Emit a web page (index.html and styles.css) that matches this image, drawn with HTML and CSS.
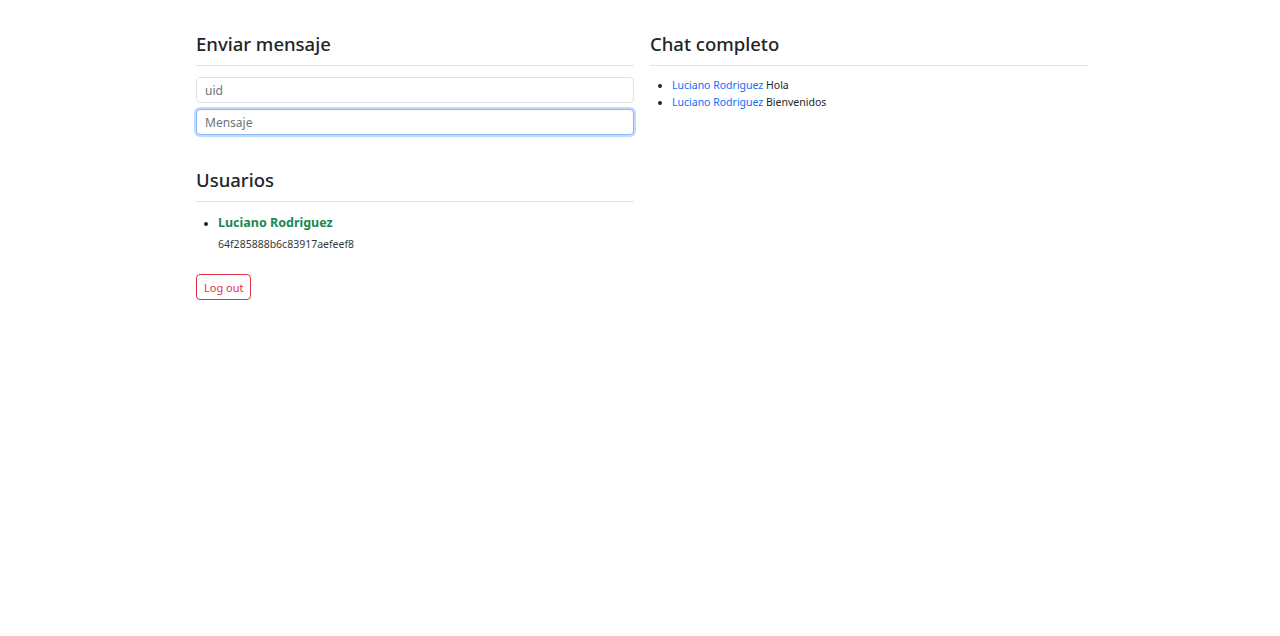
FILE: index.html
```html
<!DOCTYPE html>
<html lang="es">
<head>
<meta charset="utf-8">
<title>Chat</title>
<link rel="stylesheet" href="styles.css">
</head>
<body>
<div class="container">
  <div class="col">
    <h3 class="title">Enviar mensaje</h3>
    <hr class="sep">
    <form class="form">
      <input class="field" type="text" placeholder="uid">
      <input class="field focus" type="text" placeholder="Mensaje">
    </form>
    <h3 class="title users-title">Usuarios</h3>
    <hr class="sep">
    <ul class="users">
      <li>
        <span class="user-name">Luciano Rodriguez</span>
        <span class="user-id">64f285888b6c83917aefeef8</span>
      </li>
    </ul>
    <button class="btn-logout" type="button">Log out</button>
  </div>
  <div class="col">
    <h3 class="title">Chat completo</h3>
    <hr class="sep">
    <ul class="chat">
      <li><span class="author">Luciano Rodriguez</span> Hola</li>
      <li><span class="author">Luciano Rodriguez</span> Bienvenidos</li>
    </ul>
  </div>
</div>
</body>
</html>
```
FILE: styles.css
```css
html, body {
  margin: 0;
  padding: 0;
  background: #fff;
}
body {
  font-family: "Noto Sans", "Open Sans", sans-serif;
  color: #212529;
}
.container {
  display: flex;
  gap: 16px;
  padding: 32px 0 0 196px;
}
.col {
  width: 438px;
  display: flex;
  flex-direction: column;
}
.title {
  margin: 0;
  font-size: 18.5px;
  font-weight: 500;
  line-height: 24px;
  color: #212529;
}
.users-title {
  margin-top: 33px;
}
.sep {
  margin: 9px 0 11px;
  border: 0;
  border-top: 1px solid #dee2e6;
  height: 0;
}
.form {
  display: flex;
  flex-direction: column;
  gap: 5px;
}
.field {
  box-sizing: border-box;
  width: 100%;
  height: 26px;
  margin: 0;
  padding: 0 8px;
  font-family: inherit;
  font-size: 12px;
  color: #212529;
  border: 1px solid #dee2e6;
  border-radius: 4px;
  outline: none;
  background: #fff;
}
.field::placeholder {
  color: #6c757d;
}
.field.focus {
  border-color: #86b7fe;
  box-shadow: 0 0 0 2px rgba(13, 110, 253, 0.25);
  height: 26px;
  margin-top: 1px;
}
.users {
  margin: 0;
  padding: 0 0 0 22px;
}
.users li::marker {
  font-size: 10.5px;
}
.user-name {
  display: block;
  font-size: 12.5px;
  font-weight: 700;
  line-height: 20px;
  color: #198754;
}
.user-id {
  display: block;
  font-size: 10.5px;
  line-height: 14px;
  margin-top: 4px;
  color: #343a40;
}
.btn-logout {
  align-self: flex-start;
  margin-top: 23px;
  height: 26px;
  padding: 0 7px;
  font-family: inherit;
  font-size: 11px;
  color: #dc3545;
  background: #fff;
  border: 1px solid #dc3545;
  border-radius: 4px;
}
.chat {
  margin: 0;
  padding: 0 0 0 22px;
  font-size: 10.5px;
  line-height: 17px;
}
.author {
  color: #0d6efd;
}
```
